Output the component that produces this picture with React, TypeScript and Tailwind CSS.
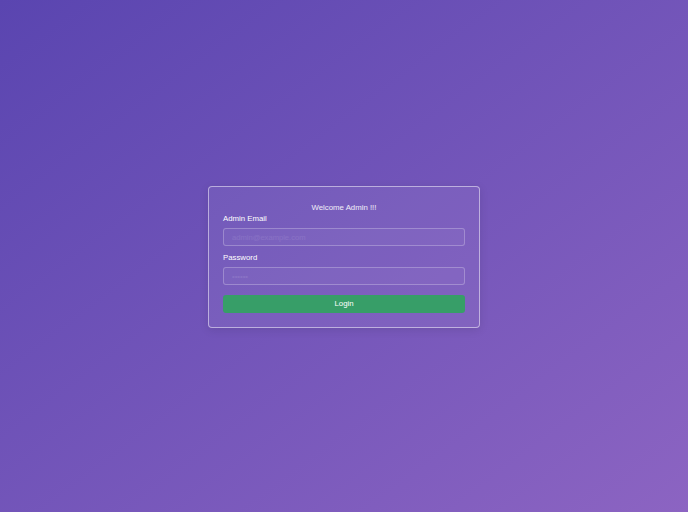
export default function App() {
  return (
    <div className="min-h-screen w-full flex items-center justify-center bg-gradient-to-br from-[#5a45b0] to-[#8c64c2] font-['Helvetica','Liberation_Sans',sans-serif]">
      <div className="mt-[2px] w-[272px] h-[142px] rounded-[4px] border border-white/50 bg-white/[0.06] px-[14px] pt-[16px] shadow-[0_2px_10px_rgba(0,0,0,0.1)]">
        <p className="text-center text-[7.8px] leading-[10px] text-white/90">Welcome Admin !!!</p>
        <label className="block mt-[1px] text-[7.8px] leading-[10px] text-white">Admin Email</label>
        <input
          type="email"
          placeholder="admin@example.com"
          className="mt-[4px] block w-full h-[18px] rounded-[3px] border border-white/25 bg-white/[0.03] px-[8px] text-[7.6px] text-white placeholder:text-white/10 outline-none"
        />
        <label className="block mt-[7px] text-[7.8px] leading-[10px] text-white">Password</label>
        <input
          type="password"
          placeholder="••••••"
          className="mt-[4px] block w-full h-[18px] rounded-[3px] border border-white/25 bg-white/[0.03] px-[8px] text-[7.6px] text-white placeholder:text-white/10 outline-none"
        />
        <button className="mt-[10px] block w-full h-[18px] rounded-[3px] bg-[#379e68] text-[7.8px] text-white">
          Login
        </button>
      </div>
    </div>
  )
}
